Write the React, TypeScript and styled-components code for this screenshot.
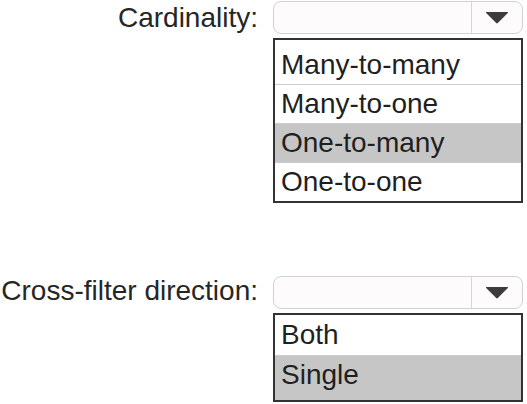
import React from "react";
import styled, { createGlobalStyle } from "styled-components";

const GlobalStyle = createGlobalStyle`
  html, body {
    margin: 0;
    padding: 0;
    background: #ffffff;
  }
  body {
    font-family: "Liberation Sans", Arial, sans-serif;
    color: #1f1f1f;
  }
`;

const Page = styled.div`
  width: 527px;
  height: 404px;
  padding-top: 1px;
  box-sizing: border-box;
  display: flex;
  flex-direction: column;
  gap: 73px;
  overflow: hidden;
`;

const Field = styled.div`
  display: grid;
  grid-template-columns: 258px 250px;
  column-gap: 15px;
  row-gap: 4px;
`;

const Label = styled.div`
  font-size: 28px;
  line-height: 33px;
  text-align: right;
  white-space: nowrap;
  color: #262626;
  align-self: center;
  margin-top: ${(p: { $shift: number }) => p.$shift}px;
`;

const SelectBox = styled.div`
  height: 33px;
  box-sizing: border-box;
  border: 1.5px solid #d2d2d2;
  border-radius: 8px;
  background: #fdfbfb;
  display: flex;
  justify-content: flex-end;
`;

const ArrowButton = styled.div`
  width: 50px;
  border-left: 1.5px solid #d6d6d6;
  display: flex;
  align-items: center;
  justify-content: center;
`;

const List = styled.div`
  grid-column: 2;
  border: 2px solid #333333;
  background: #ffffff;
  display: flex;
  flex-direction: column;
`;

const Option = styled.div<{
  $active?: boolean;
  $lh: number;
  $padTop?: number;
  $padBottom?: number;
  $first?: boolean;
}>`
  font-size: 28px;
  line-height: ${(p) => p.$lh}px;
  padding: ${(p) => p.$padTop ?? 0}px 0 ${(p) => p.$padBottom ?? 0}px 6px;
  border-top: ${(p) => (p.$first ? "none" : "1px solid #cdcdcd")};
  background: ${(p) => (p.$active ? "#c6c6c6" : "#ffffff")};
  color: #1f1f1f;
  white-space: nowrap;
`;

const Arrow = () => (
  <svg width="24" height="13" viewBox="0 0 24 13">
    <path d="M1.5 1 L22.5 1 Q23.5 1 22.8 2 L12.8 12 Q12 12.8 11.2 12 L1.2 2 Q0.5 1 1.5 1 Z" fill="#3c3c3c" />
  </svg>
);

type Opt = { text: string; active?: boolean; lh: number; padTop?: number; padBottom?: number };

const Dropdown: React.FC<{ label: string; shift: number; options: Opt[] }> = ({ label, shift, options }) => (
  <Field>
    <Label $shift={shift}>{label}</Label>
    <SelectBox>
      <ArrowButton>
        <Arrow />
      </ArrowButton>
    </SelectBox>
    <List>
      {options.map((o, i) => (
        <Option
          key={o.text}
          $first={i === 0}
          $active={o.active}
          $lh={o.lh}
          $padTop={o.padTop}
          $padBottom={o.padBottom}
        >
          {o.text}
        </Option>
      ))}
    </List>
  </Field>
);

export default function App() {
  return (
    <>
      <GlobalStyle />
      <Page>
        <Dropdown
          label="Cardinality:"
          shift={0}
          options={[
            { text: "Many-to-many", lh: 38, padTop: 6 },
            { text: "Many-to-one", lh: 38 },
            { text: "One-to-many", lh: 38, active: true },
            { text: "One-to-one", lh: 38 },
          ]}
        />
        <Dropdown
          label="Cross-filter direction:"
          shift={-4}
          options={[
            { text: "Both", lh: 40 },
            { text: "Single", lh: 38, active: true, padBottom: 6 },
          ]}
        />
      </Page>
    </>
  );
}
